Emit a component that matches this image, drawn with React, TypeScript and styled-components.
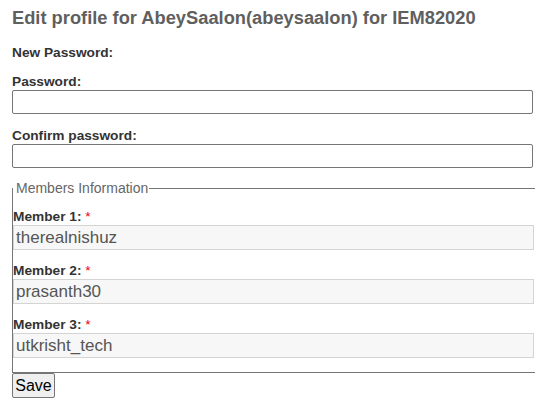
import React from "react";
import styled, { createGlobalStyle } from "styled-components";

const Global = createGlobalStyle`
  html, body { margin: 0; padding: 0; background: #fff; }
  body { font-family: "Liberation Sans", Arial, sans-serif; color: #333; }
`;

const Page = styled.div`
  padding: 7px 0 0 12px;
  width: 523px;
`;

const Title = styled.h3`
  margin: 0 0 15px 0;
  font-size: 18.3px;
  line-height: 22px;
  font-weight: bold;
  color: #5f5f5f;
`;

const Section = styled.div`
  font-size: 13.7px;
  font-weight: bold;
  line-height: 17px;
  color: #333;
  margin: 0 0 12px 0;
`;

const Field = styled.div<{ $gap: number }>`
  display: flex;
  flex-direction: column;
  margin-bottom: ${(p) => p.$gap}px;
`;

const Label = styled.label`
  font-size: 13.7px;
  font-weight: bold;
  line-height: 17px;
  color: #333;
  display: block;
`;

const Star = styled.span`
  color: #e00;
  font-weight: normal;
`;

const TextInput = styled.input`
  box-sizing: border-box;
  width: 521px;
  height: 24px;
  margin: 0;
  border: 1px solid #767676;
  border-radius: 2px;
  background: #fff;
  font-family: "Liberation Sans", Arial, sans-serif;
  font-size: 16px;
`;

const Fieldset = styled.fieldset`
  margin: 12px 0 0 0;
  padding: 0 0 14px 0;
  border: none;
  border-top: 1px solid #767676;
  border-left: 1px solid #767676;
  border-bottom: 1px solid #767676;
  width: 540px;
  box-sizing: border-box;
`;

const Legend = styled.legend`
  padding: 0 1px 0 3px;
  margin-left: 0;
  font-size: 14px;
  color: #666;
  line-height: 17px;
`;

const MemberField = styled.div<{ $top: number }>`
  display: flex;
  flex-direction: column;
  margin-top: ${(p) => p.$top}px;
`;

const MemberInput = styled.input`
  box-sizing: border-box;
  width: 521px;
  height: 25px;
  margin: 0;
  padding: 1px 2px;
  border: 1px solid #d4d4d4;
  background: #f7f7f7;
  color: #555;
  font-family: "Liberation Sans", Arial, sans-serif;
  font-size: 17px;
`;

const SaveButton = styled.button`
  font-family: "Liberation Sans", Arial, sans-serif;
  font-size: 16px;
  margin: 0;
  padding: 1px 2px;
  height: 25px;
  width: 43px;
  border: 1px solid #767676;
  border-radius: 2px;
  background: #efefef;
  color: #000;
`;

const members = [
  { n: 1, v: "therealnishuz" },
  { n: 2, v: "prasanth30" },
  { n: 3, v: "utkrisht_tech" },
];

export default function App() {
  return (
    <>
      <Global />
      <Page>
        <Title>Edit profile for AbeySaalon(abeysaalon) for IEM82020</Title>
        <Section>New Password:</Section>
        <Field $gap={13}>
          <Label>Password:</Label>
          <TextInput type="password" />
        </Field>
        <Field $gap={0}>
          <Label>Confirm password:</Label>
          <TextInput type="password" />
        </Field>
        <Fieldset>
          <Legend>Members Information</Legend>
          {members.map((m, i) => (
            <MemberField key={m.n} $top={i === 0 ? 11 : 12}>
              <Label>
                Member {m.n}: <Star>*</Star>
              </Label>
              <MemberInput readOnly value={m.v} />
            </MemberField>
          ))}
        </Fieldset>
        <SaveButton>Save</SaveButton>
      </Page>
    </>
  );
}
